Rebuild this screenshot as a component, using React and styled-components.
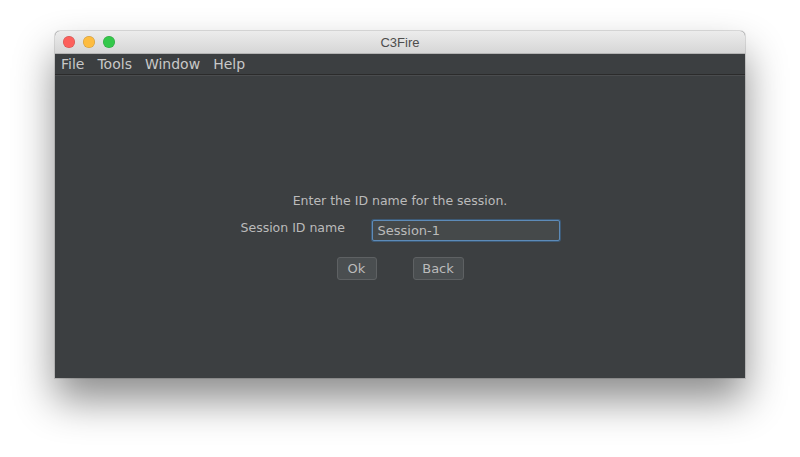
import React from 'react'
import styled, {createGlobalStyle} from 'styled-components'

const GlobalStyle = createGlobalStyle`
  html, body {
    margin: 0;
    padding: 0;
    background: #ffffff;
    font-family: "DejaVu Sans", "Liberation Sans", sans-serif;
  }
`

const Page = styled.div`
  width: 800px;
  height: 457px;
  padding: 31px 0 0 55px;
  box-sizing: border-box;
`

const Window = styled.div`
  width: 690px;
  height: 347px;
  display: flex;
  flex-direction: column;
  border-radius: 5px 5px 0 0;
  overflow: hidden;
  background: #3c3f41;
  box-shadow: 0 22px 40px rgba(0, 0, 0, 0.45), 0 0 0 1px rgba(0, 0, 0, 0.12);
`

const TitleBar = styled.div`
  height: 22px;
  flex: none;
  position: relative;
  display: flex;
  align-items: center;
  justify-content: center;
  background: linear-gradient(#ececec, #d6d6d6);
  border-bottom: 1px solid #b4b4b4;
  font-family: "Liberation Sans", sans-serif;
  font-size: 13px;
  color: #4d4d4d;
`

const Lights = styled.div`
  position: absolute;
  left: 8px;
  top: 5px;
  display: flex;
  gap: 8px;
`

const Light = styled.span`
  width: 12px;
  height: 12px;
  border-radius: 50%;
  background: ${p => p.color};
  box-shadow: inset 0 0 0 0.5px rgba(0, 0, 0, 0.2);
`

const MenuBar = styled.div`
  height: 20px;
  flex: none;
  display: flex;
  align-items: center;
  gap: 13px;
  padding: 0 6px;
  background: #3c3f41;
  border-bottom: 1px solid #2b2b2b;
  box-shadow: 0 1px 0 #4a4c4e;
  font-size: 14px;
  color: #c8c8c8;
`

const Content = styled.div`
  flex: 1;
  display: flex;
  flex-direction: column;
  align-items: center;
  padding-top: 118px;
  font-size: 12.5px;
  color: #bbbbbb;
`

const Prompt = styled.div`
  line-height: 16px;
`

const FieldRow = styled.div`
  display: flex;
  align-items: flex-start;
  margin-top: 10px;
`

const Label = styled.label`
  width: 131px;
  padding-top: 1px;
`

const Field = styled.div`
  width: 181px;
  height: 19px;
  padding: 0 0 0 5px;
  border: 1px solid #5d8bb8;
  box-shadow: 0 0 0 1px #3d5a76;
  border-radius: 2px;
  background: #45494a;
  display: flex;
  align-items: center;
  font-size: 13px;
  color: #bbbbbb;
  margin-top: 1px;
`

const Buttons = styled.div`
  display: flex;
  gap: 36px;
  margin-top: 16px;
`

const Button = styled.button`
  width: ${p => p.w}px;
  height: 23px;
  background: #4a4e50;
  border: 1px solid #5e6163;
  border-radius: 3px;
  color: #bbbbbb;
  font-family: "DejaVu Sans", sans-serif;
  font-size: 13px;
  padding: 0;
`

export default function App() {
  return (
    <>
      <GlobalStyle />
      <Page>
        <Window>
          <TitleBar>
            <Lights>
              <Light color="#fc605c" />
              <Light color="#fdbc40" />
              <Light color="#34c84a" />
            </Lights>
            C3Fire
          </TitleBar>
          <MenuBar>
            <span>File</span>
            <span>Tools</span>
            <span>Window</span>
            <span>Help</span>
          </MenuBar>
          <Content>
            <Prompt>Enter the ID name for the session.</Prompt>
            <FieldRow>
              <Label>Session ID name</Label>
              <Field>Session-1</Field>
            </FieldRow>
            <Buttons>
              <Button w={40}>Ok</Button>
              <Button w={51}>Back</Button>
            </Buttons>
          </Content>
        </Window>
      </Page>
    </>
  )
}
